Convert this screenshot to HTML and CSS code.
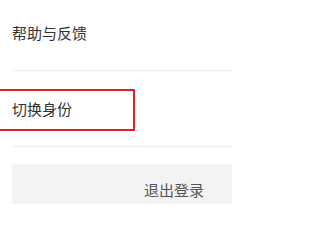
FILE: index.html
```html
<!DOCTYPE html>
<html lang="zh-CN">
<head>
<meta charset="utf-8">
<link rel="stylesheet" href="styles.css">
</head>
<body>
<div class="page">
  <ul class="menu">
    <li class="item"><span class="label">帮助与反馈</span></li>
    <li class="item"><span class="label">切换身份</span><span class="highlight"></span></li>
  </ul>
  <button class="logout">退出登录</button>
</div>
</body>
</html>
```
FILE: styles.css
```css
html, body {
  margin: 0;
  padding: 0;
  background: #ffffff;
  overflow: hidden;
}
.page {
  width: 232px;
  height: 204px;
  overflow: hidden;
  font-family: "Noto Sans CJK SC", "Noto Sans", sans-serif;
}
.menu {
  list-style: none;
  margin: -5px 0 0 12px;
  padding: 0;
}
.item {
  position: relative;
  height: 75px;
  border-bottom: 1px solid #eeeeee;
  display: flex;
  align-items: center;
}
.label {
  font-size: 15px;
  color: #333333;
  line-height: 20px;
}
.highlight {
  position: absolute;
  left: -20px;
  top: 18px;
  width: 143px;
  height: 42px;
  box-sizing: border-box;
  border: 2px solid #e31e24;
}
.logout {
  display: block;
  margin: 17px 0 0 12px;
  width: 324px;
  height: 50px;
  border: none;
  border-radius: 4px;
  background: #f3f3f3;
  font-family: "Noto Sans CJK SC", "Noto Sans", sans-serif;
  font-size: 15px;
  color: #555555;
  padding: 0;
}
```
